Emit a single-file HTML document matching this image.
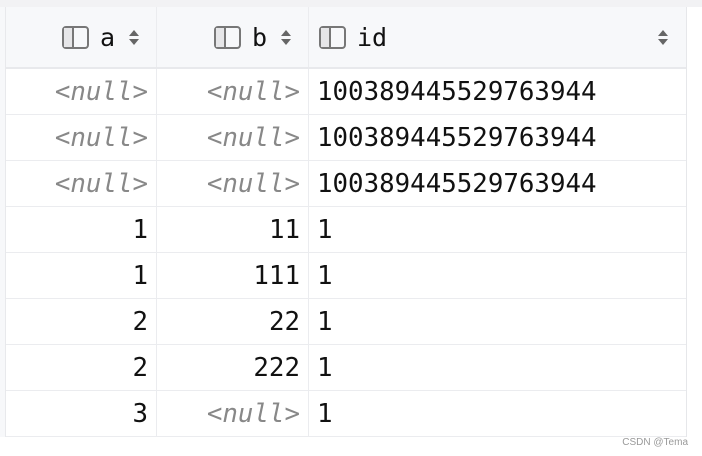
<!DOCTYPE html>
<html><head><style>
*{margin:0;padding:0;box-sizing:border-box}
body{width:702px;height:456px;background:#fff;position:relative;overflow:hidden;font-family:"DejaVu Sans Mono","Liberation Mono",monospace}
.top{position:absolute;left:0;top:0;width:702px;height:7px;background:#f2f2f4}
.gut{position:absolute;left:0;top:7px;width:6px;height:430px;background:#f7f8fa;border-right:1px solid #e8e9ec}
.tbl{position:absolute;left:6px;top:7px;width:681px;border-right:1px solid #e6e7ea}
.row{display:flex;height:46px;border-bottom:1px solid #ebecef}
.hdr{height:62px;background:#f7f8fa;border-bottom:2px solid #e8e9ec}
.c{height:100%;display:flex;align-items:center;font-size:25.8px;color:#111;border-right:1px solid #ebecef}
.a{width:151px;justify-content:flex-end;padding-right:8px}
.b{width:152px;justify-content:flex-end;padding-right:8px}
.i{flex:1;padding-left:8px;border-right:none}
.n{color:#888;font-style:italic}
.h{font-size:25px;color:#111}
.ic{width:27px;height:23px;border:2px solid #777;border-radius:4px;position:relative;margin-right:11px}
.ic:after{content:"";position:absolute;left:0;top:0;width:8px;height:100%;background:#e6e6e8;border-right:2px solid #777}
.s{margin-left:14px;display:flex;flex-direction:column;gap:3px}
.s i{display:block;width:0;height:0;border-left:5px solid transparent;border-right:5px solid transparent}
.up{border-bottom:6px solid #666}.dn{border-top:6px solid #666}
.wm{position:absolute;right:14px;top:437px;font:10px "Liberation Sans",sans-serif;color:#999}
</style></head><body>
<div class="top"></div><div class="gut"></div>
<div class="tbl">
<div class="row hdr">
<div class="c a h" style="padding-right:17px"><span class="ic"></span>a<span class="s"><i class="up"></i><i class="dn"></i></span></div>
<div class="c b h" style="padding-right:17px"><span class="ic"></span>b<span class="s"><i class="up"></i><i class="dn"></i></span></div>
<div class="c i h" style="padding-left:10px"><span class="ic"></span>id<span style="flex:1"></span><span class="s" style="margin-right:18px"><i class="up"></i><i class="dn"></i></span></div>
</div>
<div class="row"><div class="c a n">&lt;null&gt;</div><div class="c b n">&lt;null&gt;</div><div class="c i">100389445529763944</div></div>
<div class="row"><div class="c a n">&lt;null&gt;</div><div class="c b n">&lt;null&gt;</div><div class="c i">100389445529763944</div></div>
<div class="row"><div class="c a n">&lt;null&gt;</div><div class="c b n">&lt;null&gt;</div><div class="c i">100389445529763944</div></div>
<div class="row"><div class="c a">1</div><div class="c b">11</div><div class="c i">1</div></div>
<div class="row"><div class="c a">1</div><div class="c b">111</div><div class="c i">1</div></div>
<div class="row"><div class="c a">2</div><div class="c b">22</div><div class="c i">1</div></div>
<div class="row"><div class="c a">2</div><div class="c b">222</div><div class="c i">1</div></div>
<div class="row"><div class="c a">3</div><div class="c b n">&lt;null&gt;</div><div class="c i">1</div></div>
</div>
<div class="wm">CSDN @Tema</div>
</body></html>
